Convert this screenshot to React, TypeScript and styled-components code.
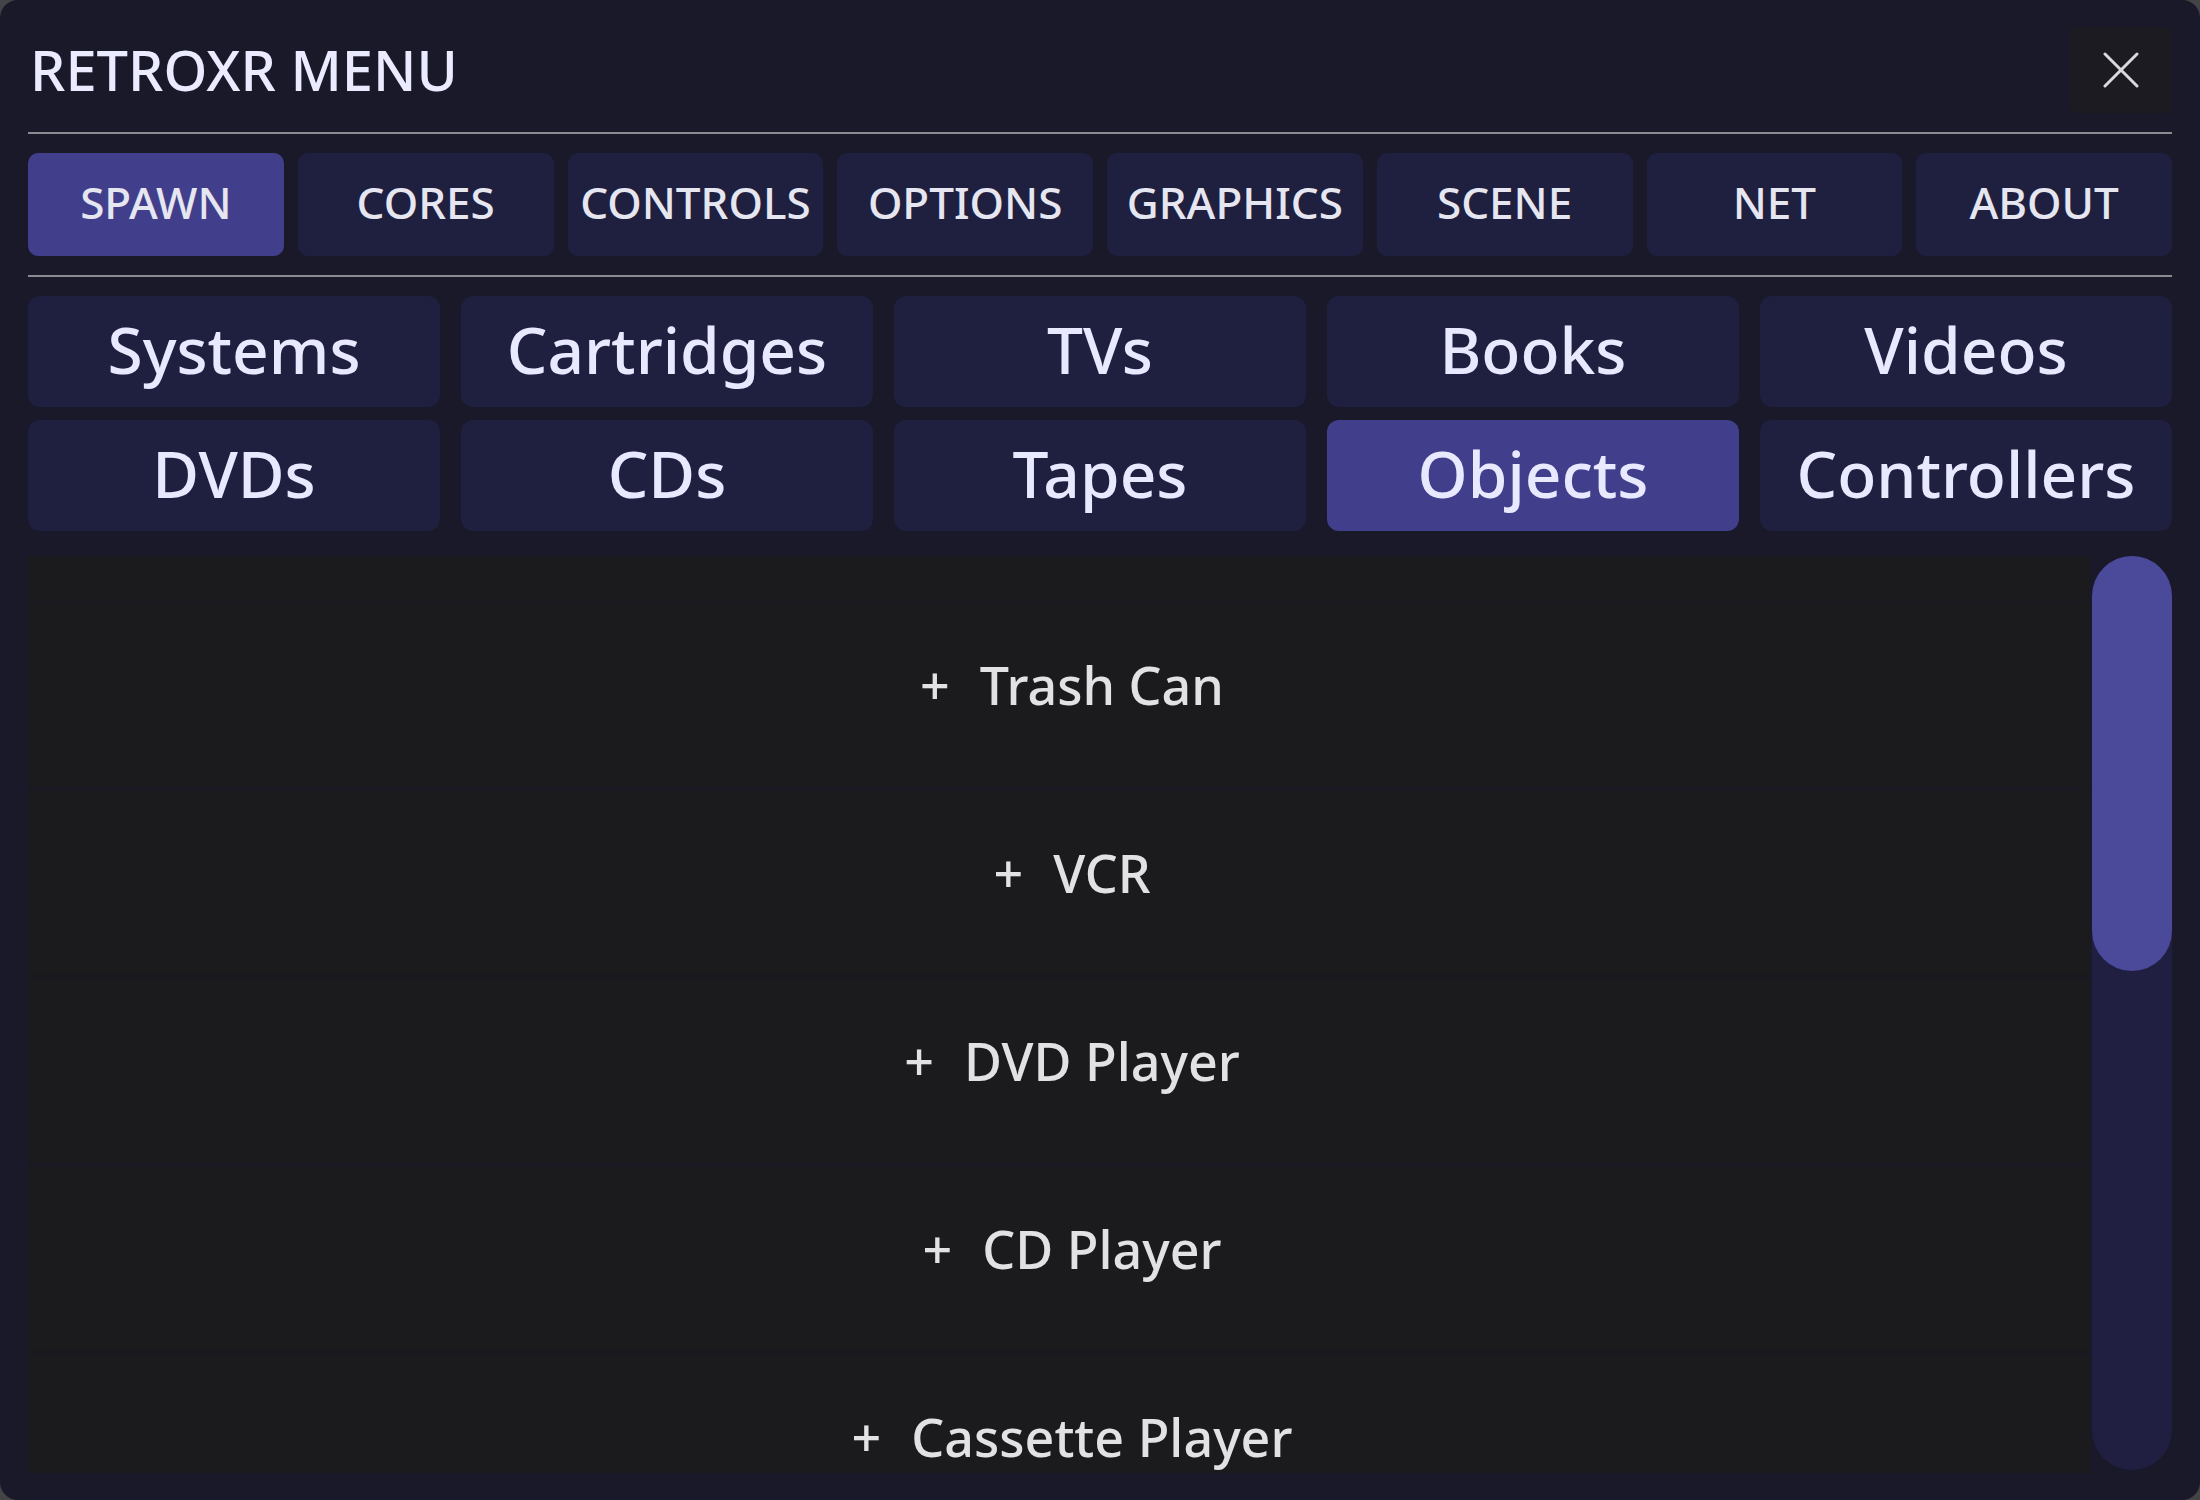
import React, { useState } from "react";
import styled, { createGlobalStyle } from "styled-components";

const GlobalStyle = createGlobalStyle`
  html, body {
    margin: 0;
    padding: 0;
    background: #444446;
  }
  body {
    font-family: "Noto Sans", "Open Sans", sans-serif;
  }
  * {
    box-sizing: border-box;
  }
`;

const TABS = ["SPAWN", "CORES", "CONTROLS", "OPTIONS", "GRAPHICS", "SCENE", "NET", "ABOUT"];

const CATEGORIES = [
  "Systems",
  "Cartridges",
  "TVs",
  "Books",
  "Videos",
  "DVDs",
  "CDs",
  "Tapes",
  "Objects",
  "Controllers",
];

const OBJECTS = ["Trash Can", "VCR", "DVD Player", "CD Player", "Cassette Player"];

export default function App() {
  const [tab, setTab] = useState("SPAWN");
  const [category, setCategory] = useState("Objects");

  return (
    <>
      <GlobalStyle />
      <PanelSC>
        <HeaderSC>
          <TitleSC>RETROXR MENU</TitleSC>
          <CloseSC aria-label="close">
            <svg width="36" height="36" viewBox="0 0 36 36">
              <path
                d="M2 2 L34 34 M34 2 L2 34"
                stroke="#d9d9de"
                strokeWidth="3"
                strokeLinecap="round"
              />
            </svg>
          </CloseSC>
        </HeaderSC>

        <DividerSC />

        <TabsSC>
          {TABS.map((t) => (
            <TabSC key={t} $active={t === tab} onClick={() => setTab(t)}>
              {t}
            </TabSC>
          ))}
        </TabsSC>

        <DividerSC />

        <CategoryGridSC>
          {CATEGORIES.map((c) => (
            <CategorySC key={c} $active={c === category} onClick={() => setCategory(c)}>
              {c}
            </CategorySC>
          ))}
        </CategoryGridSC>

        <ListWrapSC>
          <ListSC>
            {OBJECTS.map((o) => (
              <RowSC key={o}>
                <PlusSC>+</PlusSC>
                <span>{o}</span>
              </RowSC>
            ))}
          </ListSC>
          <TrackSC>
            <ThumbSC />
          </TrackSC>
        </ListWrapSC>
      </PanelSC>
    </>
  );
}

const PanelSC = styled.div`
  width: 2200px;
  height: 1500px;
  background: #19192a;
  border-radius: 18px;
  padding: 27px 28px 27px 28px;
  display: flex;
  flex-direction: column;
  overflow: hidden;
`;

const HeaderSC = styled.div`
  display: flex;
  align-items: center;
  justify-content: space-between;
  height: 86px;
  padding-left: 2px;
`;

const TitleSC = styled.h1`
  margin: 0 0 3px;
  font-size: 56px;
  font-weight: 500;
  color: #ebebff;
  letter-spacing: 0;
`;

const CloseSC = styled.button`
  width: 102px;
  height: 86px;
  border: 0;
  border-radius: 4px;
  background: #1b1b21;
  display: flex;
  align-items: center;
  justify-content: center;
  cursor: pointer;
  padding: 0;
`;

const DividerSC = styled.div`
  height: 2px;
  background: #8a8a90;
  margin: 19px 0;
`;

const TabsSC = styled.div`
  display: grid;
  grid-template-columns: repeat(8, 1fr);
  column-gap: 14px;
`;

const TabSC = styled.button<{ $active?: boolean }>`
  height: 103px;
  border: 0;
  border-radius: 10px;
  background: ${({ $active }) => ($active ? "#413f8c" : "#1f1f40")};
  color: #e6e6f0;
  font-family: "Noto Sans", sans-serif;
  font-size: 44px;
  font-weight: 500;
  cursor: pointer;
  padding: 0 0 6px;
`;

const CategoryGridSC = styled.div`
  display: grid;
  grid-template-columns: repeat(5, 1fr);
  column-gap: 21px;
  row-gap: 13px;
`;

const CategorySC = styled.button<{ $active?: boolean }>`
  height: 111px;
  border: 0;
  border-radius: 12px;
  background: ${({ $active }) => ($active ? "#413f8c" : "#1f1f40")};
  color: #e8e8ff;
  font-family: "Noto Sans", sans-serif;
  font-size: 64px;
  font-weight: 500;
  cursor: pointer;
  padding: 0 0 4px;
`;

const ListWrapSC = styled.div`
  flex: 1;
  min-height: 0;
  margin-top: 25px;
  display: flex;
  gap: 2px;
`;

const ListSC = styled.div`
  flex: 1;
  background: #1b1b1e;
  padding-top: 47px;
  display: flex;
  flex-direction: column;
  gap: 4px;
  overflow: hidden;
`;

const RowSC = styled.div`
  flex: 0 0 184px;
  display: flex;
  align-items: center;
  justify-content: center;
  gap: 30px;
  padding: 0 0 22px 26px;
  background: #1b1b1e;
  box-shadow: 0 -3px 4px -1px #1a1a27;
  color: #e2e2e4;
  font-size: 52px;
  font-weight: 500;
`;

const PlusSC = styled.span`
  font-size: 52px;
  font-weight: 500;
`;

const TrackSC = styled.div`
  width: 80px;
  margin-bottom: 3px;
  border-radius: 40px;
  background: #201f42;
  display: flex;
  flex-direction: column;
`;

const ThumbSC = styled.div`
  height: 415px;
  border-radius: 40px;
  background: #4b4a9a;
`;
